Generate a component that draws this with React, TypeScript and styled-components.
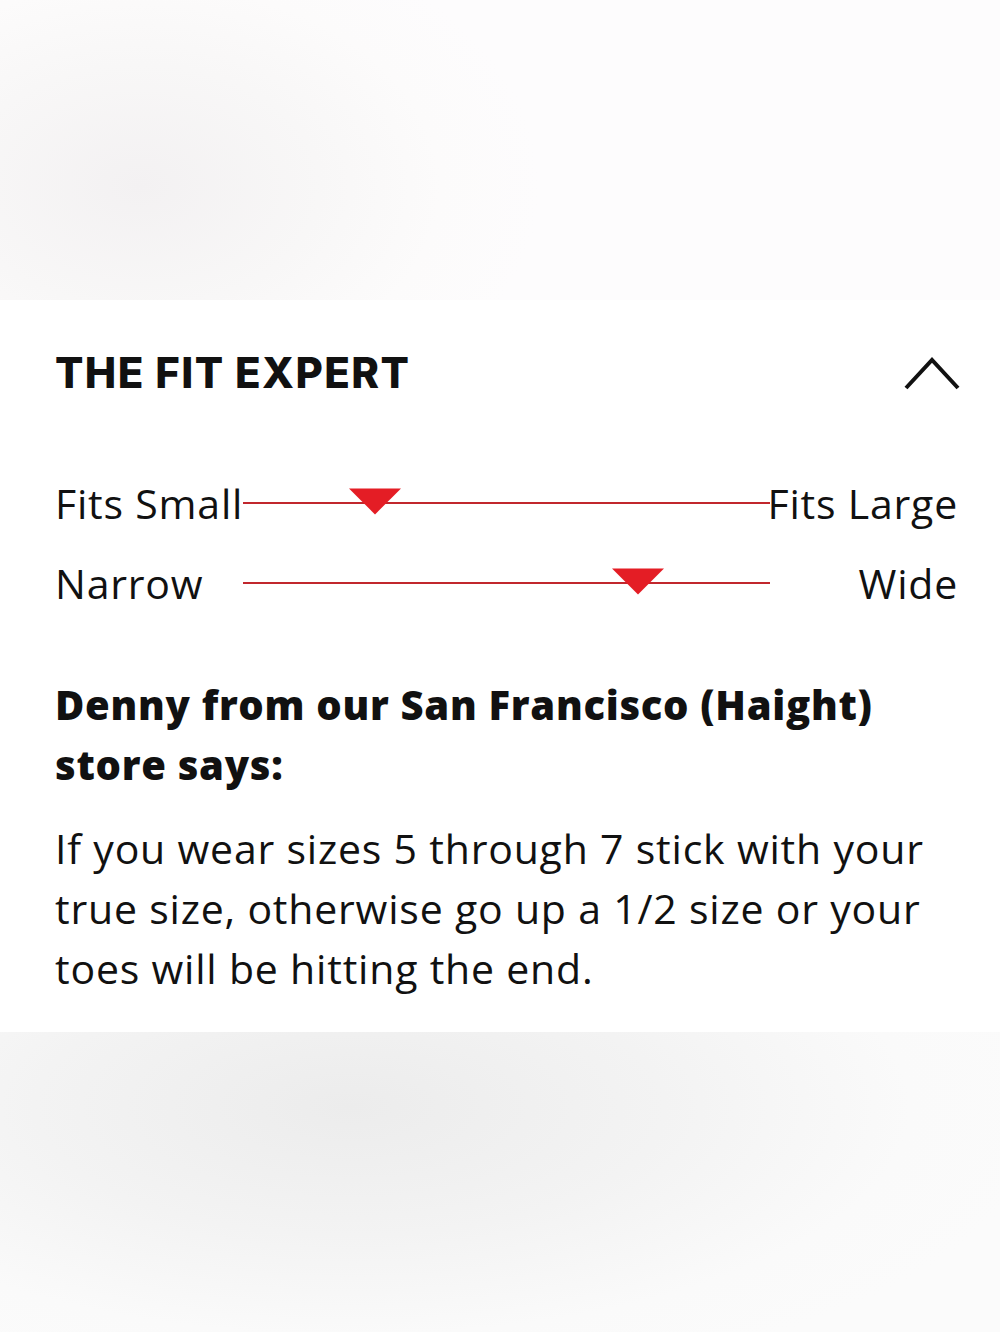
import styled, { createGlobalStyle } from "styled-components";

const GlobalStyle = createGlobalStyle`
  html, body {
    margin: 0;
    padding: 0;
    background: #ffffff;
  }
  * {
    box-sizing: border-box;
  }
`;

const Page = styled.div`
  display: flex;
  flex-direction: column;
  width: 1000px;
  min-height: 1332px;
  font-family: "Open Sans", "Noto Sans", sans-serif;
  color: #111111;
`;

const Backdrop = styled.div<{ $bottom?: boolean }>`
  height: 300px;
  flex: ${(p) => (p.$bottom ? 1 : "none")};
  background: ${(p) =>
    p.$bottom
      ? "radial-gradient(ellipse 70% 95% at 35% 25%, #ececec 0%, #f3f3f3 45%, #fafafa 80%, #fbfbfb 100%)"
      : "radial-gradient(ellipse 40% 90% at 14% 62%, #f3f1f2 0%, #f8f7f7 45%, #fcfbfb 75%, #fdfcfd 100%)"};
`;

const Panel = styled.section`
  background: #ffffff;
  padding: 0 42px 34px 55px;
`;

const Header = styled.div`
  display: flex;
  align-items: center;
  justify-content: space-between;
  height: 146px;
`;

const Title = styled.h2`
  margin: 0;
  font-family: "Inter", "Liberation Sans", sans-serif;
  font-weight: 800;
  font-size: 42px;
  line-height: 1;
  letter-spacing: 1.4px;
  text-transform: uppercase;
`;

const Toggle = styled.button`
  display: flex;
  padding: 0;
  margin-right: -2px;
  border: none;
  background: none;
  cursor: pointer;
`;

const Scales = styled.div`
  margin-top: 17px;
`;

const ScaleRow = styled.div`
  display: grid;
  grid-template-columns: 188px 1fr 188px;
  align-items: center;
  height: 80px;
`;

const ScaleLabel = styled.span<{ $end?: boolean }>`
  font-size: 41px;
  line-height: 80px;
  letter-spacing: 0.8px;
  white-space: nowrap;
  justify-self: ${(p) => (p.$end ? "end" : "start")};
  position: relative;
  z-index: 1;
`;

const Track = styled.div`
  position: relative;
  height: 2px;
  background: #c1272d;
  box-shadow: 0 0 0.5px #e88a8e;
`;

const Marker = styled.span`
  position: absolute;
  top: 50%;
  width: 0;
  height: 0;
  border-left: 26px solid transparent;
  border-right: 26px solid transparent;
  border-top: 26px solid #e41d25;
  transform: translate(-50%, -56%);
`;

const Quote = styled.h3`
  margin: 52px 0 0;
  font-weight: 800;
  font-size: 40px;
  line-height: 60px;
  letter-spacing: 0.7px;
`;

const Body = styled.p`
  margin: 23px 0 0;
  font-size: 41px;
  line-height: 60px;
  letter-spacing: 0.8px;
`;

const scales = [
  { low: "Fits Small", high: "Fits Large", value: 25 },
  { low: "Narrow", high: "Wide", value: 75 },
];

export default function App() {
  return (
    <>
      <GlobalStyle />
      <Page>
        <Backdrop />
        <Panel>
          <Header>
            <Title>The Fit Expert</Title>
            <Toggle aria-label="Collapse">
              <svg width="56" height="34" viewBox="0 0 56 34" fill="none">
                <polyline
                  points="2,32 28,4 54,32"
                  stroke="#111"
                  strokeWidth="4"
                  strokeLinejoin="miter"
                />
              </svg>
            </Toggle>
          </Header>
          <Scales>
            {scales.map((s) => (
              <ScaleRow key={s.low}>
                <ScaleLabel>{s.low}</ScaleLabel>
                <Track>
                  <Marker style={{ left: `${s.value}%` }} />
                </Track>
                <ScaleLabel $end>{s.high}</ScaleLabel>
              </ScaleRow>
            ))}
          </Scales>
          <Quote>Denny from our San Francisco (Haight) store says:</Quote>
          <Body>
            If you wear sizes 5 through 7 stick with your true size, otherwise
            go up a 1/2 size or your toes will be hitting the end.
          </Body>
        </Panel>
        <Backdrop $bottom />
      </Page>
    </>
  );
}
